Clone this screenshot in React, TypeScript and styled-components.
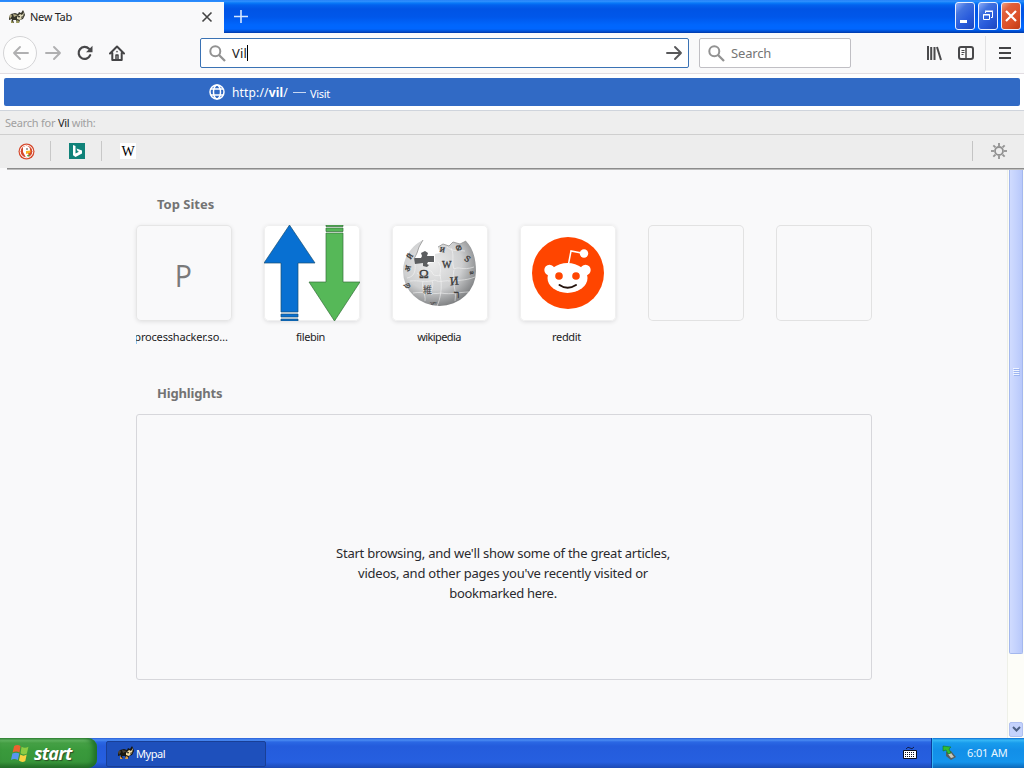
import React from 'react';
import styled, { createGlobalStyle } from 'styled-components';

const Global = createGlobalStyle`
  * { box-sizing: border-box; }
  body { margin: 0; background: #f9f9fa; overflow: hidden; font-family: "Noto Sans", "Open Sans", sans-serif; }
  svg { display: block; flex: none; }
`;

const Screen = styled.div`
  width: 1024px;
  height: 768px;
  display: flex;
  flex-direction: column;
  overflow: hidden;
`;

const Label = styled.span<{ $size?: number; $color?: string; $track?: number }>`
  font-size: ${p => p.$size ?? 11}px;
  color: ${p => p.$color ?? '#222'};
  letter-spacing: ${p => p.$track ?? 0}px;
  white-space: pre;
`;

const TitleBar = styled.header`
  height: 33px;
  flex: none;
  display: flex;
  background: linear-gradient(#1c7af5 0, #3593ff 1px, #087af8 3px, #0262ee 5px, #0054e5 9px, #0057ea 17px, #0066fd 25px, #0066ff 29px, #0052d8 31px, #0038a8 33px);
`;

const Tab = styled.div`
  width: 224px;
  height: 31px;
  margin-top: 2px;
  background: #f9f9fa;
  display: flex;
  align-items: center;
  padding: 0 11px 1px 9px;
  gap: 5px;
  svg:last-child { margin-left: auto; }
`;

const TabTitle = styled(Label)`
  margin-top: -1px;
`;

const NewTab = styled.div`
  width: 34px;
  padding: 9px 0 0 9px;
`;

const Controls = styled.div`
  margin-left: auto;
  padding: 2px 3px 0 0;
  display: flex;
  gap: 3px;
`;

const WinButton = styled.div<{ $close?: boolean }>`
  width: 20px;
  height: 28px;
  border: 1px solid #e8efff;
  border-radius: 3px;
  background: ${p => p.$close
    ? 'linear-gradient(135deg, #f0a080 0, #e0603c 25%, #dc5028 65%, #c03a14 100%)'
    : 'linear-gradient(135deg, #8cacf8 0, #4273e0 28%, #2a5cdc 60%, #1c46c0 100%)'};
  display: flex;
  align-items: center;
  justify-content: center;
`;

const Toolbar = styled.nav`
  height: 41px;
  flex: none;
  background: #f9f9fa;
  border-bottom: 1px solid #e2dde2;
  display: flex;
  align-items: center;
`;

const NavButtons = styled.div`
  width: 200px;
  display: flex;
  align-items: center;
  padding-left: 3px;
`;

const BackButton = styled.div`
  width: 34px;
  height: 34px;
  border: 1px solid #d4d4d6;
  border-radius: 50%;
  background: #fdfdfd;
  display: grid;
  place-items: center;
  margin-right: 8px;
`;

const NavIcon = styled.div`
  width: 32px;
`;

const Field = styled.div<{ $width: number; $active?: boolean }>`
  width: ${p => p.$width}px;
  height: 30px;
  border: 1px solid ${p => (p.$active ? '#3a72b4' : '#c0bfc4')};
  border-radius: 2px;
  background: #fff;
  display: flex;
  align-items: center;
  padding: 0 5px 0 8px;
  gap: 6px;
  margin-right: ${p => (p.$active ? 10 : 0)}px;
  svg:nth-of-type(2) { margin-left: auto; }
`;

const Typed = styled(Label)`
  border-right: 1px solid #000;
  line-height: 16px;
`;

const ToolGroup = styled.div`
  margin-left: auto;
  display: flex;
  align-items: center;
  height: 100%;
  gap: 16px;
`;

const MenuSlot = styled.div`
  height: 35px;
  width: 39px;
  margin-left: -5px;
  border-left: 1px solid #e2e2e4;
  display: flex;
  align-items: center;
  padding-left: 12px;
`;

const Suggestions = styled.div`
  height: 36px;
  flex: none;
  background: #fff;
  padding: 4px;
`;

const Suggestion = styled.div`
  height: 28px;
  border-radius: 2px;
  background: #316ac5;
  display: flex;
  align-items: center;
  padding-left: 205px;
`;

const Url = styled(Label)`
  margin-left: 7px;
  width: 61px;
  padding-top: 1px;
`;

const Dash = styled.i`
  width: 13px;
  height: 1px;
  background: #c8d8f2;
  margin-right: 4px;
`;

const Action = styled(Label)`
  padding-top: 2px;
`;

const SearchWith = styled.div`
  height: 25px;
  flex: none;
  background: #eeeeee;
  border-top: 1px solid #cfd4dc;
  border-bottom: 1px solid #cfcfcf;
  padding-left: 5px;
  display: flex;
  align-items: center;
`;

const Engines = styled.div`
  height: 33px;
  flex: none;
  background: #ededed;
  display: flex;
  align-items: center;
  padding-bottom: 1px;
`;

const PopupShadow = styled.div`
  height: 2px;
  flex: none;
  margin: 0 0 -1px 7px;
  background: linear-gradient(#8c8c8c 50%, #bcbcbc 50%);
  position: relative;
`;

const Engine = styled.div<{ $last?: boolean }>`
  width: 51px;
  height: 20px;
  display: grid;
  place-items: center;
  padding-left: ${p => (p.$last ? 1 : 2)}px;
  border-right: ${p => (p.$last ? 0 : 1)}px solid #c8c8c8;
`;

const Settings = styled.div`
  width: 52px;
  height: 20px;
  margin-left: auto;
  border-left: 1px solid #c4c4c4;
  display: grid;
  place-items: center;
`;

const Body = styled.div`
  flex: 1;
  min-height: 0;
  display: flex;
  background: #f9f9fa;
`;

const Page = styled.main`
  flex: 1;
  padding: 25px 0 0 136px;
`;

const Heading = styled.h2<{ $track: number }>`
  margin: 0 0 0 21px;
  height: 20px;
  font-size: 13px;
  line-height: 20px;
  font-weight: 700;
  letter-spacing: ${p => p.$track}px;
  color: #737373;
`;

const Tiles = styled.div`
  display: flex;
  gap: 32px;
  margin-top: 11px;
  height: 158px;
`;

const Site = styled.div`
  width: 96px;
`;

const Tile = styled.div<{ $kind: 'image' | 'letter' | 'empty' }>`
  width: 96px;
  height: 96px;
  border-radius: 5px;
  overflow: hidden;
  display: grid;
  place-items: center;
  background: ${p => (p.$kind === 'image' ? '#fff' : '#f9f9fa')};
  box-shadow: ${p => ({
    empty: 'inset 0 0 0 1px #e2e2e2',
    letter: 'inset 0 0 0 1px #e6e6e6, 0 1px 4px rgba(12,12,13,0.1)',
    image: 'inset 0 0 0 1px #f0f0f0, 0 1px 4px rgba(12,12,13,0.12)',
  }[p.$kind])};
`;

const Initial = styled.span`
  font: 400 31px/40px "Open Sans", sans-serif;
  color: #7a7a7a;
  padding: 3px 2px 0 0;
  transform: scaleX(0.92);
`;

const SiteName = styled.div<{ $track: number; $shift: number }>`
  width: 96px;
  padding-right: ${p => p.$shift}px;
  height: 20px;
  margin-top: 6px;
  line-height: 20px;
  font-size: 11px;
  letter-spacing: ${p => p.$track}px;
  color: #1c1c1e;
  overflow: hidden;
  display: flex;
  justify-content: center;
  white-space: nowrap;
`;

const Empty = styled.section`
  width: 736px;
  height: 266px;
  margin-top: 11px;
  border: 1px solid #d7d7db;
  border-radius: 3px;
  display: flex;
  flex-direction: column;
  align-items: center;
  padding-top: 128px;
  font-size: 13px;
  line-height: 20px;
  color: #2a2a2e;
`;

const Line = styled.div<{ $track: number }>`
  letter-spacing: ${p => p.$track}px;
  white-space: pre;
  margin-right: 2px;
`;

const Scrollbar = styled.aside`
  width: 17px;
  background: #fdfdf8;
  border-left: 1px solid #eef0e8;
  display: flex;
  flex-direction: column;
  justify-content: space-between;
  padding: 0 1px 1px 1px;
`;

const Thumb = styled.div`
  height: 485px;
  border: 1px solid #a4b8ee;
  border-top: 0;
  border-radius: 0 0 2px 2px;
  background: linear-gradient(90deg, #d0dbfe, #c4d2fd 50%, #b8c8fa);
  display: flex;
  flex-direction: column;
  align-items: center;
  padding-top: 199px;
  gap: 1px;
`;

const Grip = styled.i`
  width: 6px;
  height: 1px;
  background: #eef3ff;
  box-shadow: 1px 1px 0 #9cb4f0;
`;

const ScrollButton = styled.div`
  height: 15px;
  border: 1px solid #b0c0f0;
  border-radius: 2px;
  background: #c4d2fc;
  display: grid;
  place-items: center;
`;

const Taskbar = styled.footer`
  height: 30px;
  flex: none;
  display: flex;
  background: linear-gradient(#2a5fd8 0, #4a8cf2 2px, #2b68e4 4px, #245cdc 8px, #265fe0 24px, #1c49b4 30px);
`;

const Start = styled.div`
  width: 97px;
  border-radius: 0 9px 9px 0;
  background: linear-gradient(#3c8c3c 0, #6abd68 2px, #45a045 5px, #3a9a3c 12px, #37953a 24px, #256c28 30px);
  box-shadow: inset -4px 0 5px #1f7028;
  display: flex;
  align-items: center;
  padding: 0 0 1px 11px;
  gap: 5px;
  font: italic 700 18px/24px "Open Sans", sans-serif;
  letter-spacing: -0.8px;
  color: #fff;
  text-shadow: 1px 1px 1px #2a4d24;
`;

const TaskItem = styled.div`
  width: 160px;
  height: 26px;
  margin: 3px 0 0 9px;
  border-radius: 2px;
  border: 1px solid #193f96;
  background: #1e50bc;
  display: flex;
  align-items: center;
  padding: 0 0 2px 11px;
  gap: 2px;
`;

const Keyboard = styled.div`
  margin: 8px 14px 0 auto;
`;

const Tray = styled.div`
  width: 93px;
  border-left: 1px solid #0c3c9c;
  background: linear-gradient(#0e6cd2 0, #38b8f6 2px, #189cec 5px, #128fe8 12px, #1494ec 24px, #0c68b8 30px);
  box-shadow: inset 1px 0 0 #35b4f4;
  display: flex;
  align-items: center;
  padding: 0 0 1px 10px;
  gap: 10px;
`;

const Raccoon = ({ dark = false }: { dark?: boolean }) => (
  <svg width="16" height="16" viewBox="0 0 16 16">
    <path d="M0 8 2 5 6 4 9 5 10 3 12 4 14 1 15 3 16 6 14 10 11 11 10 14H8L7 11 4 11 5 14H2L3 10 0 11Z" fill={dark ? '#17150f' : '#34342a'} />
    <path d="m0 7 2-2 1 2-2 3Zm4-2 5 1-4 2Z" fill={dark ? '#4c4235' : '#b7af87'} />
    <path d="m8 8 3-3 2 1 2-3-1 5-3 3-3-1Z" fill={dark ? '#f3dca5' : '#ded9b8'} />
    <path d="m9 7 2 0-1 2Zm4 0 1 1-2 1Z" fill="#15130f" />
    <path d="m2 11 3 3H2Zm6 0 2 1v2H7Z" fill={dark ? '#d89648' : '#9a985c'} />
  </svg>
);

const Magnifier = () => (
  <svg width="17" height="17" viewBox="0 0 17 17" fill="none" stroke="#929292">
    <circle cx="6.3" cy="6.3" r="5" strokeWidth="2" />
    <path d="m10 10 6 6" strokeWidth="2.3" />
  </svg>
);

const Arrow = ({ color, flip = false }: { color: string; flip?: boolean }) => (
  <svg width="17" height="16" viewBox="0 0 17 16" fill="none" stroke={color} strokeWidth="1.9" strokeLinecap="round" strokeLinejoin="round">
    <path d={flip ? 'M16 8H2M8 2 2 8l6 6' : 'M1 8h14M9 2 15 8l-6 6'} />
  </svg>
);

const Filebin = () => (
  <svg width="96" height="96" viewBox="0 0 96 96">
    <g stroke="#174f72" strokeWidth=".7">
      <path d="M25.5 0 51 38H34v49H17V38H0Z" fill="#0870d2" />
      <path d="M17 89h17v3H17zm0 5h17v2H17z" fill="#0870d2" />
    </g>
    <g stroke="#34703a" strokeWidth=".7">
      <path d="M62 8h17v49h17L70.5 96 45 57h17Z" fill="#56b858" />
      <path d="M62 0h17v1.5H62zm0 3h17v3.5H62z" fill="#56b858" />
    </g>
  </svg>
);

const Wikipedia = () => (
  <svg width="96" height="96" viewBox="0 0 96 96" fontFamily="Liberation Serif, serif" fill="#3c3c3c">
    <defs>
      <radialGradient id="globe" cx=".4" cy=".35" r=".68">
        <stop offset="0" stopColor="#ececec" />
        <stop offset=".6" stopColor="#cecfd0" />
        <stop offset="1" stopColor="#7c7e80" />
      </radialGradient>
    </defs>
    <path d="M31 15 27 22 25 28 22 34 26 38H32L35 41 38 38 43 37V29L48 28 46 22 51 19 57 21 61 17 68 19 74 16C81 23 84 34 84 46A36.5 35 0 0 1 11 46C11 33 19 21 31 15Z" fill="url(#globe)" />
    <path d="M22 33h7l1-2-1-3 4-2 3 2-1 3h7v6h-6l-1 2 2 1-2 2-4-1v-3l-8 1Z" fill="#5b5d5f" />
    <path d="m31 15-4 7-2 6-3 6m24-12 5-3 6 2 4-4 7 2 6-3" fill="none" stroke="#929292" strokeWidth=".8" />
    <g fill="none" stroke="#fafafa" strokeWidth=".7" opacity=".75">
      <path d="M23 39c1 9-2 13-8 14m10-5q5 4 8-1 3-4 7 0 1 5 8 3c3 12 0 25-3 31M18 56c10-1 15 2 25-1 4 3 10 0 14 1 8-1 16 0 26-4M46 37c4 4 2 9 2 14M59 23c4 8 0 13 3 21 6-3 8 2 20-2M31 56c-2 8 3 13 2 20M62 45c-3 13 3 19 1 31M21 68c12-2 17 2 28 0 11 2 18-1 28-1M40 70c-3-4 3-8 0-14M55 22c6 5 11 3 18 4" />
    </g>
    <g stroke="#3c3c3c" strokeWidth=".35">
      <text x="27" y="53" fontSize="13">Ω</text>
      <text x="50" y="43" fontSize="10">W</text>
      <text x="58" y="60" fontSize="12" transform="rotate(-5 62 56)">И</text>
      <text x="31" y="68" fontSize="9" fontFamily="Noto Sans CJK JP, sans-serif" strokeWidth="0">維</text>
      <text x="73" y="37" fontSize="9" transform="rotate(35 76 34)">S</text>
      <text x="64" y="26" fontSize="8" transform="rotate(25 68 22)">Ф</text>
      <text x="48" y="27" fontSize="7" transform="rotate(10 50 24)">И</text>
      <text x="62" y="73" fontSize="11">ר</text>
      <text x="16" y="34" fontSize="7" transform="rotate(-55 18 32)">Й</text>
      <text x="13" y="48" fontSize="8" transform="rotate(-80 15 45)">अ</text>
      <text x="14" y="62" fontSize="8" transform="rotate(65 16 60)">ற</text>
      <text x="38" y="80" fontSize="5" strokeWidth="0">ገም</text>
      <text x="79" y="51" fontSize="7" transform="rotate(80 81 48)">a</text>
    </g>
  </svg>
);

const Reddit = () => (
  <svg width="96" height="96" viewBox="0 0 96 96">
    <circle cx="48" cy="48" r="36" fill="#ff4500" />
    <g fill="#fff">
      <circle cx="29.5" cy="45" r="5.2" />
      <circle cx="65.5" cy="45" r="5.2" />
      <circle cx="64" cy="28.5" r="4.2" />
      <ellipse cx="47.5" cy="53" rx="20" ry="15" />
      <path d="m48.5 39 2.5-13 13 2.5" fill="none" stroke="#fff" strokeWidth="1.5" />
    </g>
    <circle cx="39" cy="51" r="3.8" fill="#ff4500" />
    <circle cx="56" cy="51" r="3.8" fill="#ff4500" />
    <path d="M39.5 60q8 5.5 16.5 0" fill="none" stroke="#24130d" strokeWidth="2" strokeLinecap="round" />
  </svg>
);

const Gear = () => (
  <svg width="18" height="18" viewBox="-9 -9 18 18" fill="none" stroke="#929292" strokeWidth="1.8">
    <circle r="4" />
    {[0, 45, 90, 135, 180, 225, 270, 315].map(a => <path key={a} d="M0-5V-8" transform={`rotate(${a})`} />)}
  </svg>
);

export default function App() {
  return (
    <Screen>
      <Global />
      <TitleBar>
        <Tab>
          <Raccoon />
          <TabTitle $track={-0.3}>New Tab</TabTitle>
          <svg width="12" height="12" viewBox="0 0 12 12"><path d="m1.5 1.5 9 9m0-9-9 9" stroke="#444" strokeWidth="1.6" /></svg>
        </Tab>
        <NewTab><svg width="15" height="15" viewBox="0 0 15 15"><path d="M8 1v13M1 7.500h14" stroke="#d5e7ff" strokeWidth="1.6" /></svg></NewTab>
        <Controls>
          <WinButton><svg width="16" height="20"><path d="M3 14h7v3H3z" fill="#fff" /></svg></WinButton>
          <WinButton><svg width="14" height="14" viewBox="0 0 14 14" fill="none" stroke="#fff"><path d="M4.500 4V2.500h7v6H10M4 2h8M2.500 5.500h6v5h-6zM2 6h7" /></svg></WinButton>
          <WinButton $close><svg width="14" height="14"><path d="m2 2 10 10M12 2 2 12" stroke="#fff" strokeWidth="2.2" /></svg></WinButton>
        </Controls>
      </TitleBar>

      <Toolbar>
        <NavButtons>
          <BackButton><Arrow color="#b0b0b1" flip /></BackButton>
          <NavIcon><Arrow color="#b0b0b1" /></NavIcon>
          <NavIcon>
            <svg width="16" height="16" viewBox="0 0 16 16"><path d="M13.2 10.2A6 6 0 1 1 12 3.8" fill="none" stroke="#48484a" strokeWidth="2.2" strokeLinecap="round" /><path d="M15.5.8v6.4H9Z" fill="#48484a" /></svg>
          </NavIcon>
          <NavIcon>
            <svg width="16" height="16" viewBox="0 0 16 16" fill="none" stroke="#444446" strokeWidth="2" strokeLinecap="round" strokeLinejoin="round"><path d="m1 8.500 7-7 7 7M3.300 8v7h9.400V8" /><path d="M7 14v-4h2v4M8 6.500v.2" strokeWidth="1.5" /></svg>
          </NavIcon>
        </NavButtons>
        <Field $width={489} $active>
          <Magnifier />
          <Typed $size={13} $track={0.2}>Vil</Typed>
          <Arrow color="#58585a" />
        </Field>
        <Field $width={152}>
          <Magnifier />
          <Label $size={13} $color="#757575" $track={-0.15}>Search</Label>
        </Field>
        <ToolGroup>
          <svg width="16" height="16" viewBox="0 0 16 16" fill="none" stroke="#4a4a4c" strokeWidth="2"><path d="M2 1v14M5.200 2v13M8.500 2v13M11 2l4 13" /></svg>
          <svg width="16" height="16" viewBox="0 0 16 16" fill="none" stroke="#48484a"><rect x="1" y="2" width="14" height="12" rx="2" strokeWidth="2" /><path d="M8 2v12" strokeWidth="1.5" /><path d="M3.500 5.500h3m-3 2h3m-3 2h2" /></svg>
          <MenuSlot><svg width="14" height="14"><path d="M1 2h12M1 7h12M1 12h12" stroke="#444446" strokeWidth="2" /></svg></MenuSlot>
        </ToolGroup>
      </Toolbar>

      <Suggestions>
        <Suggestion>
          <svg width="16" height="16" viewBox="0 0 16 16" fill="none" stroke="#fff" strokeWidth="1.5"><circle cx="8" cy="8" r="7" /><ellipse cx="8" cy="8" rx="3.5" ry="7" /><path d="M2 5h12M2 11h12" /></svg>
          <Url $size={12} $color="#fff" $track={0.15}>http://<b>vil</b>/</Url>
          <Dash />
          <Action $color="#fff" $track={-0.3}>Visit</Action>
        </Suggestion>
      </Suggestions>
      <SearchWith>
        <Label $color="#a0a0a0" $track={-0.24}>Search for </Label>
        <Label $color="#222" $track={-0.28}>Vil</Label>
        <Label $color="#a0a0a0" $track={-0.35}> with:</Label>
      </SearchWith>
      <Engines>
        <Engine>
          <svg width="17" height="17" viewBox="0 0 17 17"><circle cx="8.5" cy="8.5" r="8" fill="#d5482b" /><circle cx="8.5" cy="8.5" r="6.3" fill="#d5482b" stroke="#fff" /><path d="M5 4 8 2.800q4.500.5 4 5L10 10l1 4-3 .5L5 9Z" fill="#fff" /><path d="m8 8 5-.5-1 2.500-4 1Z" fill="#f7b321" /><circle cx="9" cy="6" r=".8" fill="#333" /><path d="m9 12 3 0-2 2Z" fill="#4ca840" /></svg>
        </Engine>
        <Engine>
          <svg width="16" height="16" viewBox="0 0 16 16"><path d="M0 0h16v16H0z" fill="#108279" /><path d="m4 2 2.500 1v7.500L10 8.700 8.500 8 7.500 5.500 13 7.500v3L6.500 14 4 12.300Z" fill="#fff" /></svg>
        </Engine>
        <Engine $last>
          <svg width="16" height="16" viewBox="0 0 16 16"><path d="M0 0h16v16H0z" fill="#fff" /><text x="8" y="13" textAnchor="middle" fontFamily="Liberation Serif, serif" fontSize="14">W</text></svg>
        </Engine>
        <Settings><Gear /></Settings>
      </Engines>
      <PopupShadow />

      <Body>
        <Page>
          <Heading $track={0}>Top Sites</Heading>
          <Tiles>
            <Site><Tile $kind="letter"><Initial>P</Initial></Tile><SiteName $track={-0.18} $shift={6}>processhacker.so…</SiteName></Site>
            <Site><Tile $kind="image"><Filebin /></Tile><SiteName $track={-0.45} $shift={3}>filebin</SiteName></Site>
            <Site><Tile $kind="image"><Wikipedia /></Tile><SiteName $track={-0.6} $shift={2}>wikipedia</SiteName></Site>
            <Site><Tile $kind="image"><Reddit /></Tile><SiteName $track={-0.35} $shift={3}>reddit</SiteName></Site>
            <Site><Tile $kind="empty" /></Site>
            <Site><Tile $kind="empty" /></Site>
          </Tiles>
          <Heading $track={-0.18}>Highlights</Heading>
          <Empty>
            <Line $track={-0.24}>Start browsing, and we'll show some of the great articles,</Line>
            <Line $track={-0.22}>videos, and other pages you've recently visited or</Line>
            <Line $track={-0.3}>bookmarked here.</Line>
          </Empty>
        </Page>
        <Scrollbar>
          <Thumb><Grip /><Grip /><Grip /><Grip /></Thumb>
          <ScrollButton><svg width="9" height="7"><path d="m1 1 3.500 3.500L8 1" fill="none" stroke="#4d6185" strokeWidth="2" /></svg></ScrollButton>
        </Scrollbar>
      </Body>

      <Taskbar>
        <Start>
          <svg width="18" height="18" viewBox="0 0 17 17"><path d="M3 2q3-2 6 0L8 8Q5 6 1.500 8Z" fill="#ed6230" /><path d="M10 2.500q3 2 6.500 0L15 9q-3 2-6-.3Z" fill="#8ccb43" /><path d="M1.300 9Q5 7.300 7.800 9L6.500 15Q3 13.500 0 15Z" fill="#5796f0" /><path d="M8.800 10q3 2 6 0l-1.300 6q-3 2-6-.5Z" fill="#f8d141" /></svg>
          start
        </Start>
        <TaskItem><Raccoon dark /><Label $color="#fff" $track={-0.45}>Mypal</Label></TaskItem>
        <Keyboard>
          <svg width="14" height="13" viewBox="0 0 14 13"><path d="M3 3q2-3 4-1t4-1" fill="none" stroke="#10204c" /><path d="M.5 4.500h13v8H.5z" fill="#fff" stroke="#080d1e" /><path d="M2 6.500h10M2 8.500h10M2 10.500h10" stroke="#080d1e" strokeDasharray="1 1" /></svg>
        </Keyboard>
        <Tray>
          <svg width="15" height="15" viewBox="0 0 15 15"><path d="m4 7 5-1 5 6-5 3-5-4Z" fill="#555d60" /><path d="m6 9 3-1 3 4-3 1Z" fill="#c9c9bb" /><path d="m1 1 8 1-2 2 2 4-3 1-2-4-3 1Z" fill="#31bd30" stroke="#16732b" strokeWidth=".6" /></svg>
          <Label $color="#e9f7ff" $track={-0.15}>6:01 AM</Label>
        </Tray>
      </Taskbar>
    </Screen>
  );
}
